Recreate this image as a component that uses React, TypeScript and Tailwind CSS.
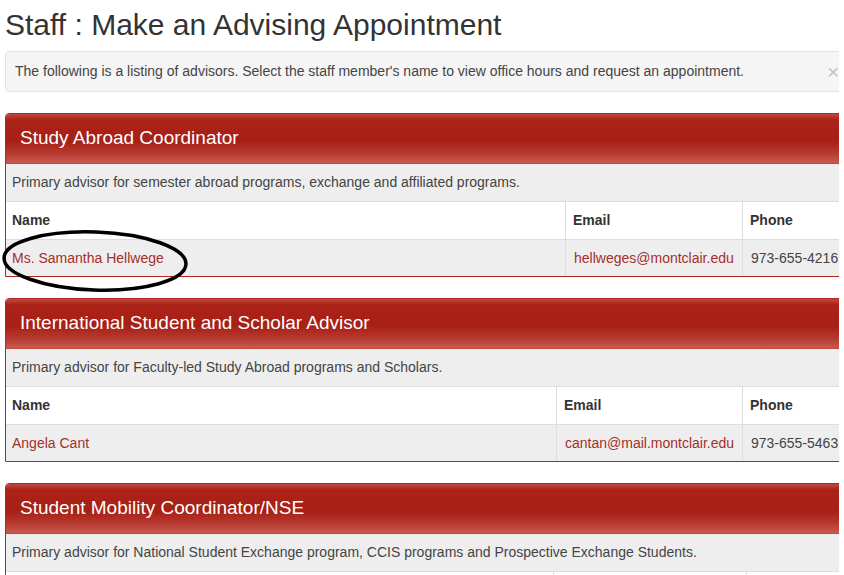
import React from "react";

type Person = { name: string; email: string; phone: string };
type PanelProps = {
  title: string;
  desc: string;
  cols: [number, number];
  person?: Person;
  showHead?: boolean;
};

function Panel({ title, desc, cols, person, showHead = true }: PanelProps) {
  return (
    <div className="w-[860px] border border-[#b3271f] rounded-t-[4px] mb-[21px] overflow-hidden">
      <div className="h-[49px] flex items-center pl-[14px] text-white text-[19px] bg-[linear-gradient(to_bottom,#c0493f_0%,#aa2218_12%,#a81f15_55%,#b6392f_80%,#c8594f_100%)]">
        {title}
      </div>
      <div className="h-[38px] flex items-center pl-[6px] bg-[#eeeeee] text-[14px] text-[#444] border-t border-[#c2473c]">
        {desc}
      </div>
      <div className="h-[38px] flex bg-white border-t border-[#dddddd] text-[14px] font-bold text-[#333]">
        <div className="flex items-center pl-[6px]" style={{ width: cols[0] }}>
          {showHead ? "Name" : ""}
        </div>
        <div className="flex items-center pl-[7px] border-l border-[#dddddd]" style={{ width: cols[1] }}>
          {showHead ? "Email" : ""}
        </div>
        <div className="flex items-center pl-[7px] border-l border-[#dddddd] flex-1">
          {showHead ? "Phone" : ""}
        </div>
      </div>
      {person && (
        <div className="h-[37px] flex bg-[#eeeeee] border-t border-[#dddddd] text-[14px]">
          <div className="flex items-center pl-[6px] text-[#a3302b]" style={{ width: cols[0] }}>
            {person.name}
          </div>
          <div
            className="flex items-center pl-[8px] border-l border-[#dddddd] text-[#a3302b]"
            style={{ width: cols[1] }}
          >
            {person.email}
          </div>
          <div className="flex items-center pl-[8px] border-l border-[#dddddd] flex-1 text-[#444]">
            {person.phone}
          </div>
        </div>
      )}
    </div>
  );
}

export default function App() {
  return (
    <div className="relative w-[844px] h-[575px] overflow-hidden bg-white text-[#333] font-['Liberation_Sans',Arial,sans-serif]">
      <div className="ml-[5px] w-[834px] overflow-hidden">
        <h1 className="mt-[8px] text-[30px] leading-[33px] font-normal text-[#333] whitespace-nowrap">
          Staff : Make an Advising Appointment
        </h1>
        <div className="mt-[10px] h-[41px] w-[860px] flex items-center pl-[9px] bg-[#f5f5f5] border border-[#e3e3e3] rounded-[4px] text-[14px] text-[#444] relative">
          The following is a listing of advisors. Select the staff member's name to view office hours and request an appointment.
          <span className="absolute left-[821px] top-[9px] text-[21px] leading-[21px] text-[#c4c4c4]">×</span>
        </div>
        <div className="mt-[21px]">
          <Panel
            title="Study Abroad Coordinator"
            desc="Primary advisor for semester abroad programs, exchange and affiliated programs."
            cols={[559, 177]}
            person={{
              name: "Ms. Samantha Hellwege",
              email: "hellweges@montclair.edu",
              phone: "973-655-4216",
            }}
          />
          <Panel
            title="International Student and Scholar Advisor"
            desc="Primary advisor for Faculty-led Study Abroad programs and Scholars."
            cols={[550, 186]}
            person={{
              name: "Angela Cant",
              email: "cantan@mail.montclair.edu",
              phone: "973-655-5463",
            }}
          />
          <Panel
            title="Student Mobility Coordinator/NSE"
            desc="Primary advisor for National Student Exchange program, CCIS programs and Prospective Exchange Students."
            cols={[547, 193]}
            showHead={false}
          />
        </div>
      </div>
      <svg
        className="absolute left-0 top-0 pointer-events-none"
        width="844"
        height="575"
        viewBox="0 0 844 575"
      >
        <ellipse
          cx="95"
          cy="261"
          rx="91"
          ry="29"
          fill="none"
          stroke="#000"
          strokeWidth="3.5"
          transform="rotate(2 95 261)"
        />
      </svg>
    </div>
  );
}
